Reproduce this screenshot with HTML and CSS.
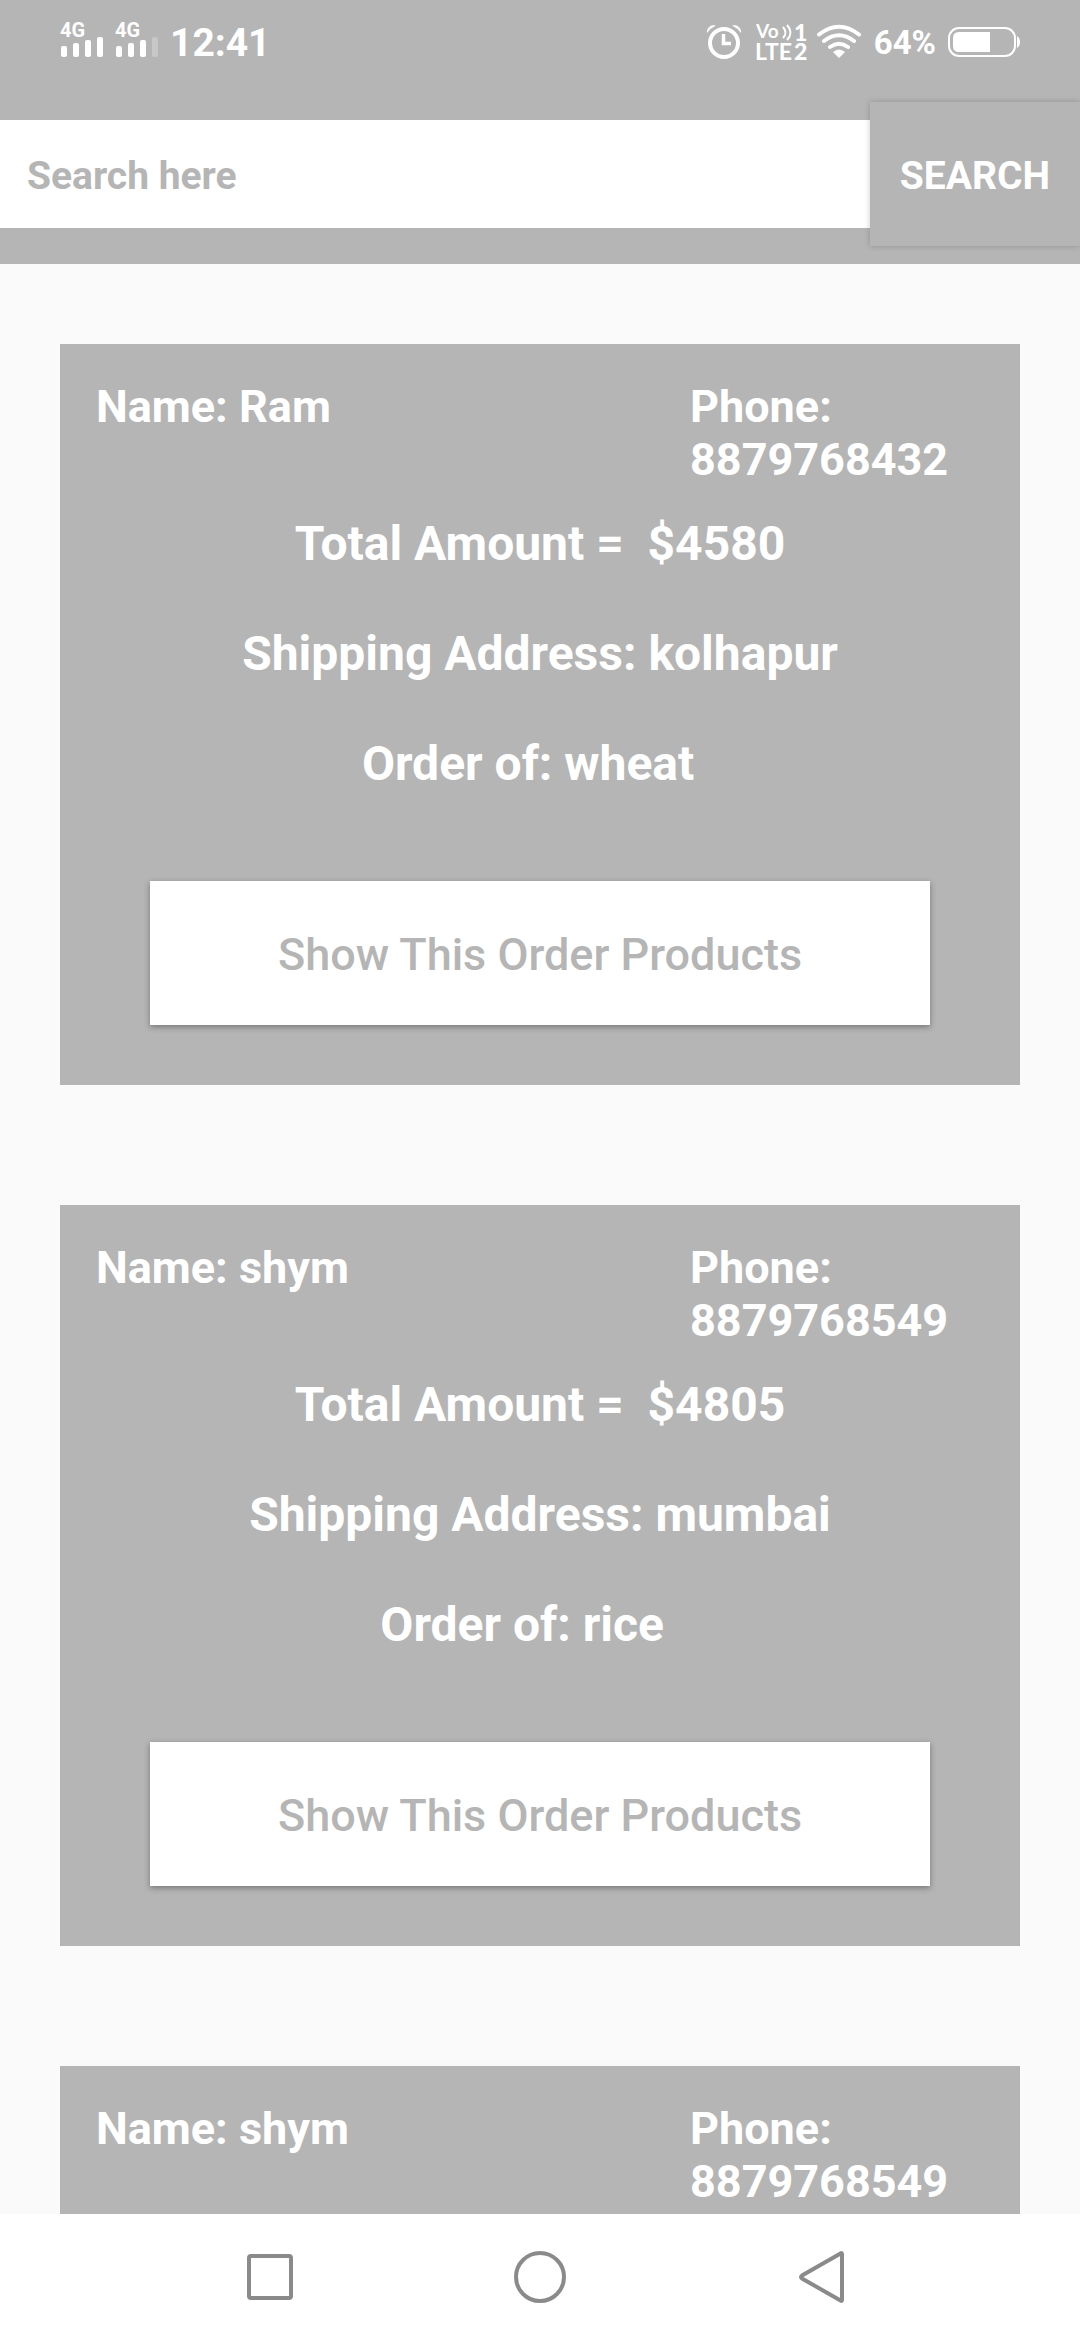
FILE: index.html
```html
<!DOCTYPE html>
<html lang="en">
<head>
<meta charset="utf-8">
<meta name="viewport" content="width=device-width, initial-scale=1">
<title>Orders</title>
<link rel="stylesheet" href="styles.css">
</head>
<body>
<div class="app">
  <header class="top">
    <div class="status">
      <div class="status-group">
        <svg class="signal" width="98" height="60" viewBox="0 -10 98 60" fill="#fff">
          <text class="net" x="0" y="17">4G</text>
          <text class="net" x="55" y="17">4G</text>
          <rect x="1" y="26" width="6" height="11" rx="2"/>
          <rect x="13" y="23" width="6" height="14" rx="2"/>
          <rect x="25" y="20" width="6" height="17" rx="2"/>
          <rect x="37" y="17" width="6" height="20" rx="2"/>
          <rect x="56" y="26" width="6" height="11" rx="2"/>
          <rect x="68" y="23" width="6" height="14" rx="2"/>
          <rect x="80" y="20" width="6" height="17" rx="2"/>
          <rect x="92" y="17" width="6" height="20" rx="2" opacity=".25"/>
        </svg>
        <span class="clock">12:41</span>
      </div>
      <div class="status-group">
        <svg width="36" height="40" viewBox="0 0 36 40" fill="none" stroke="#fff" stroke-linecap="round">
          <circle cx="18" cy="23" r="14" stroke-width="4"/>
          <path d="M17.500 14v9.500H25" stroke-width="3.500" stroke-linecap="butt"/>
          <path d="M1 13A7 7 0 0 1 10 5.500Q4.500 8 1 13zM35 13A7 7 0 0 0 26 5.500Q31.500 8 35 13z" fill="#fff" stroke="none"/>
        </svg>
        <svg class="volte" width="54" height="60" viewBox="0 -10 54 60" fill="#fff">
          <text class="volte-small" x="0" y="18">Vo</text>
          <path d="M27 7q5 5.500 0 11M31 5q7 7.500 0 15" fill="none" stroke="#fff" stroke-width="2"/>
          <text class="volte-num" x="38" y="21">1</text>
          <text class="volte-lte" x="-1" y="40">LTE</text>
          <text class="volte-num" x="38" y="40">2</text>
        </svg>
        <svg class="wifi" width="46" height="40" viewBox="0 0 46 40" fill="none" stroke="#fff" stroke-width="4" stroke-linecap="round">
          <path d="M3 14.500Q23 -1 43 14.500M8 21Q23 9.500 38 21M14 27Q23 20.500 32 27"/>
          <path d="M17 32Q23 27 29 32L23 38z" fill="#fff" stroke="none"/>
        </svg>
        <span class="percent">64%</span>
        <svg width="72" height="40" viewBox="0 0 72 40">
          <rect x="1" y="8" width="66" height="28" rx="10" fill="none" stroke="#fff" stroke-width="2"/>
          <path d="M42 12v20H11q-6 0-6-6v-8q0-6 6-6zM69 16q3 2 3 6t-3 6z" fill="#fff"/>
        </svg>
      </div>
    </div>
    <form class="search">
      <input class="search-input" type="text" placeholder="Search here" aria-label="Search here">
      <button class="search-button" type="button">SEARCH</button>
    </form>
  </header>

  <main class="orders">
    <article class="card">
      <div class="contact"><span>Name: Ram</span><span>Phone: 8879768432</span></div>
      <div class="details">
        <p>Total Amount =&nbsp; $4580</p>
        <p>Shipping Address: kolhapur</p>
        <p>Order of: wheat&nbsp;&nbsp;</p>
      </div>
      <button class="show" type="button">Show This Order Products</button>
    </article>
    <article class="card">
      <div class="contact"><span>Name: shym</span><span>Phone: 8879768549</span></div>
      <div class="details">
        <p>Total Amount =&nbsp; $4805</p>
        <p>Shipping Address: mumbai</p>
        <p>Order of: rice&nbsp;&nbsp;&nbsp;</p>
      </div>
      <button class="show" type="button">Show This Order Products</button>
    </article>
    <article class="card">
      <div class="contact"><span>Name: shym</span><span>Phone: 8879768549</span></div>
    </article>
  </main>

  <nav class="navbar">
    <button class="nav-button" type="button" aria-label="Recent apps">
      <svg width="72" height="72" viewBox="0 0 72 72"><rect x="15" y="15" width="42" height="42" rx="2"/></svg>
    </button>
    <button class="nav-button" type="button" aria-label="Home">
      <svg width="72" height="72" viewBox="0 0 72 72"><circle cx="36" cy="36" r="24"/></svg>
    </button>
    <button class="nav-button" type="button" aria-label="Back">
      <svg width="72" height="72" viewBox="0 0 72 72"><path d="M66.500 12.500Q68 11.500 68 13V59Q68 60.500 66.500 59.500L28 37.500Q26 36 28 34.500z"/></svg>
    </button>
  </nav>
</div>
</body>
</html>
```

FILE: styles.css
```css
* {
  box-sizing: border-box;
}

body {
  margin: 0;
  background: #fafafa;
  font-family: Roboto, "Liberation Sans", sans-serif;
}

button,
input {
  border: 0;
  border-radius: 0;
  font-family: inherit;
}

.app {
  display: flex;
  flex-direction: column;
  height: 100vh;
  overflow: hidden;
}

.top {
  flex: none;
  padding-bottom: 18px;
  background: #b5b5b5;
}

.status {
  display: flex;
  justify-content: space-between;
  padding: 20px 60px 42px;
  color: #fff;
}

.status-group {
  display: flex;
  align-items: center;
  height: 40px;
}

.signal {
  margin-right: 12px;
}

.net {
  font-size: 20px;
  font-weight: 700;
}

.clock {
  margin-top: 6px;
  font-size: 39px;
  font-weight: 700;
  line-height: 46px;
}

.volte {
  margin: 0 6px 0 14px;
}

.volte-small {
  font-family: Lato, sans-serif;
  font-size: 19px;
  font-weight: 700;
}

.volte-lte {
  font-family: Lato, sans-serif;
  font-size: 23px;
  font-weight: 700;
}

.volte-num {
  font-family: Lato, sans-serif;
  font-size: 23px;
  font-weight: 900;
}

.percent {
  margin: 6px 12px 0;
  font-size: 33px;
  font-weight: 700;
  line-height: 40px;
}

.search {
  display: flex;
  align-items: center;
}

.search-input {
  flex: 1;
  min-width: 0;
  height: 108px;
  padding: 3px 27px 0;
  background: #fff;
  color: #b5b5b5;
  font-size: 39px;
  font-weight: 700;
}

.search-input::placeholder {
  color: #b5b5b5;
  opacity: 1;
}

.search-button {
  height: 144px;
  padding: 3px 30px 0;
  background: #b5b5b5;
  box-shadow: 0 0 6px rgba(0, 0, 0, 0.2);
  color: #fff;
  font-size: 39px;
  font-weight: 700;
}

.orders {
  display: flex;
  flex: 1;
  flex-direction: column;
  gap: 120px;
  min-height: 0;
  padding: 80px 60px 0;
  overflow: hidden;
}

.card {
  flex: none;
  padding: 36px 0 60px;
  background: #b5b5b5;
  color: #fff;
}

.contact {
  display: grid;
  grid-template-columns: 2fr 1fr;
  padding: 0 33px 0 36px;
  font-size: 45px;
  font-weight: 700;
  line-height: 53px;
}

.details {
  display: grid;
  gap: 54px;
  padding: 30px 0 89px;
  font-size: 48px;
  font-weight: 700;
  line-height: 56px;
  text-align: center;
}

.details p {
  margin: 0;
}

.show {
  display: block;
  width: calc(100% - 180px);
  height: 144px;
  margin: 0 auto;
  padding: 3px 0 0;
  background: #fff;
  box-shadow: 0 2px 6px rgba(0, 0, 0, 0.35);
  color: #b5b5b5;
  font-size: 45px;
  font-weight: 500;
}

.navbar {
  display: flex;
  flex: none;
  justify-content: space-around;
  height: 126px;
  padding: 0 12.5%;
  background: #fff;
}

.nav-button {
  display: flex;
  align-items: center;
  padding: 0;
  background: none;
}

.nav-button svg {
  fill: none;
  stroke: #8a8a8a;
  stroke-width: 4;
}
```
